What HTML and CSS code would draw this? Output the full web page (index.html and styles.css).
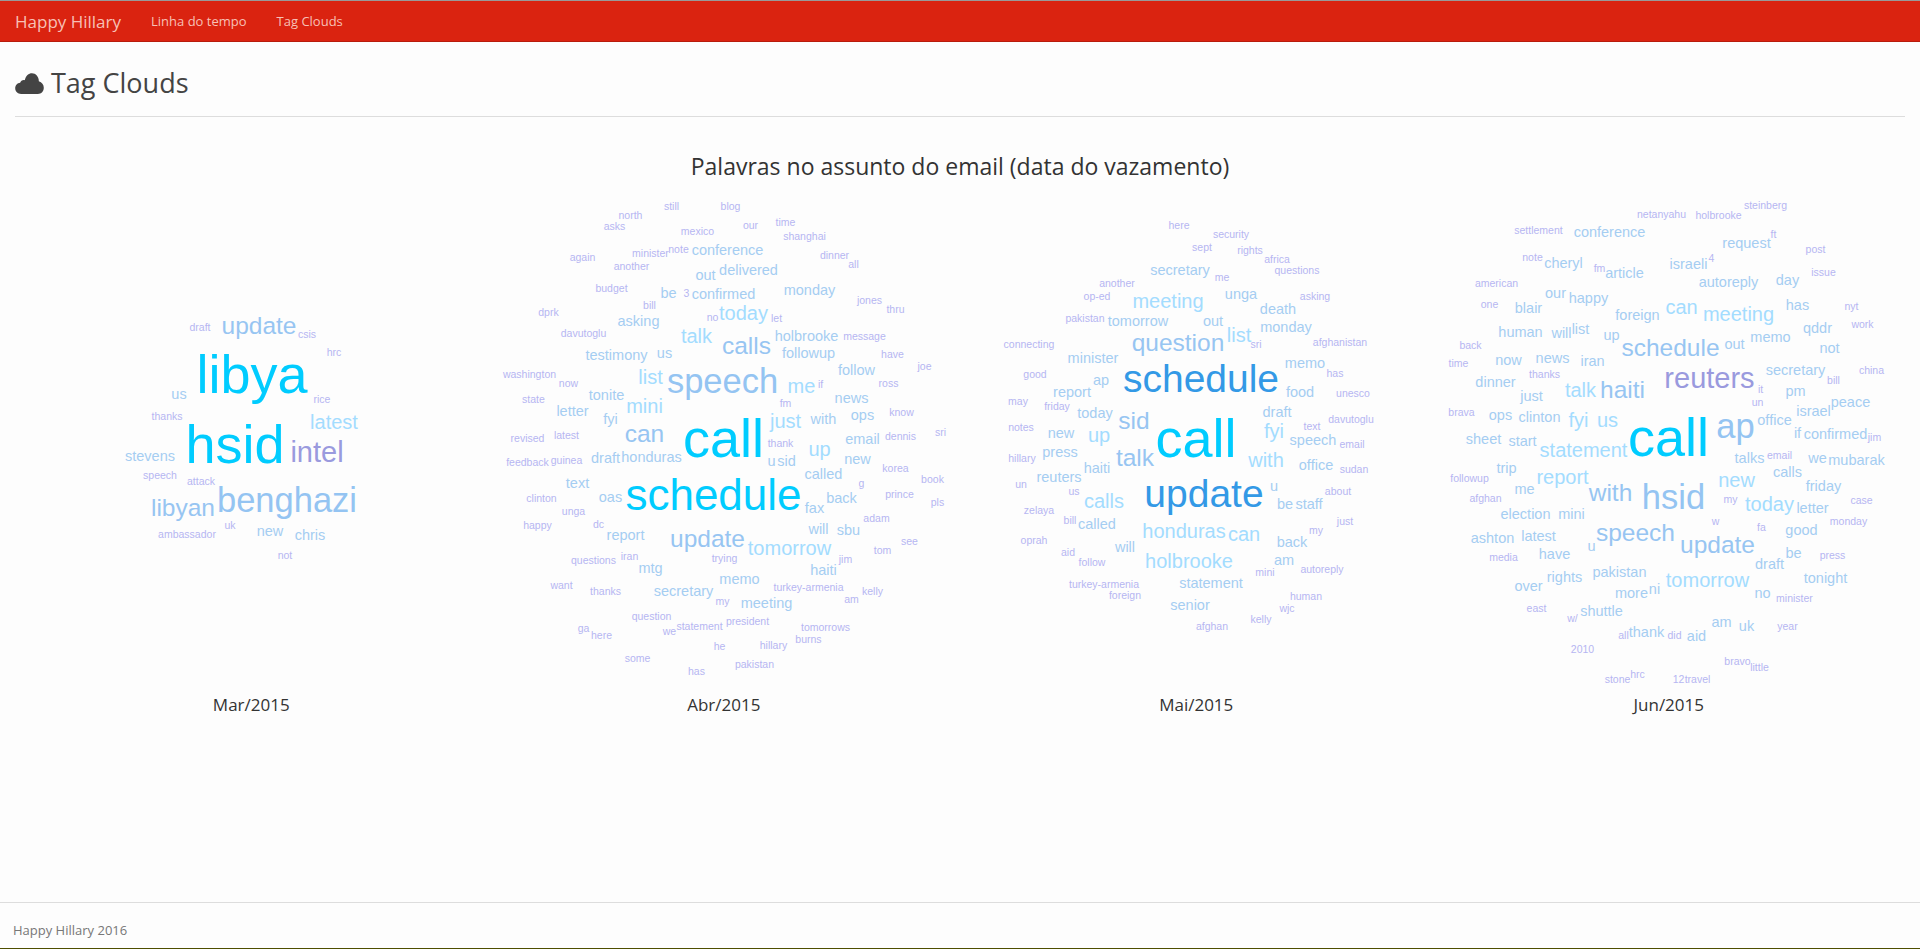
FILE: index.html
```html
<!DOCTYPE html>
<html>
<head>
    <meta charset="utf-8">
    <title>Happy Hillary</title>
    <link rel="stylesheet" href="styles.css">
</head>
<body>
    <nav class="navbar">
        <a class="brand" href="#">Happy Hillary</a>
        <a class="nav-link" href="#">Linha do tempo</a>
        <a class="nav-link" href="#">Tag Clouds</a>
    </nav>

    <main class="content">
        <h1 class="page-title">
            <svg class="title-icon" viewBox="0 0 29 21.3"><path d="M6 21.3C2.6 21.3 0 18.7 0 15.5 0 12.6 2.2 10.3 5 10 5.5 8 7.6 6.8 9.7 7.3 10.7 3 13.6 .3 17 .3c3.8 0 7 3.3 7 8.1 3 .8 5 3.6 5 6.6 0 3.5-2.5 6.3-6 6.3z"/></svg>
            Tag Clouds
        </h1>
        <h2 class="chart-title">Palavras no assunto do email (data do vazamento)</h2>
        <div id="clouds" class="cloud-grid"></div>
    </main>

    <footer class="footer">Happy Hillary 2016</footer>

    <script src="clouds.js"></script>
</body>
</html>
```

FILE: styles.css
```css
html, body {
    margin: 0;
    padding: 0;
}

body {
    font-family: "Open Sans", sans-serif;
    background-color: #fdfdfd;
    color: #333;
    min-height: 949px;
    box-sizing: border-box;
    display: flex;
    flex-direction: column;
    border-bottom: 1px solid #4d4d00;
}

.navbar {
    display: flex;
    align-items: center;
    height: 40px;
    padding-left: 15px;
    background-color: #da2310;
    border-top: 1px solid #999;
    border-bottom: 1px solid #b81c0c;
}

.brand {
    color: #f7c0b6;
    font-size: 17px;
    text-decoration: none;
    margin-right: 30px;
}

.nav-link {
    color: #f7c0b6;
    font-size: 13px;
    text-decoration: none;
    margin-right: 30px;
}

.content {
    padding: 0 15px;
    flex: 1;
}

.page-title {
    display: flex;
    align-items: center;
    gap: 7px;
    margin: 0;
    padding: 24px 0 16px;
    font-size: 27px;
    font-weight: 400;
    line-height: 34px;
    color: #444;
    border-bottom: 1px solid #ddd;
}

.title-icon {
    width: 29px;
    height: 21px;
    fill: #444;
}

.chart-title {
    margin: 35px 0 10px;
    font-size: 23px;
    font-weight: 400;
    line-height: 28px;
    text-align: center;
}

.cloud-grid {
    display: grid;
    grid-template-columns: repeat(4, 1fr);
}

.cloud {
    margin: 0;
    text-align: center;
    font-size: 17px;
}

.cloud svg {
    display: block;
    width: 100%;
    height: 500px;
}

.cloud text {
    font-family: "Liberation Sans", Arial, sans-serif;
    text-anchor: middle;
}

.cloud figcaption {
    margin-top: 5px;
    line-height: 20px;
}

/* tamanho e cor por peso da palavra */
.w1 { font-size: 10.5px; fill: #b6b6f2; }
.w2 { font-size: 14.5px; fill: #a5cdf2; }
.w3 { font-size: 20px; fill: #a3dcff; }
.w4 { font-size: 24.5px; fill: #97c5f2; }
.w5 { font-size: 29px; fill: #9a9ade; }
.w6 { font-size: 34.5px; fill: #94c4f2; }
.w7 { font-size: 39px; fill: #3399e6; }
.w8 { font-size: 54px; fill: #00ccff; }
.w9 { font-size: 44px; fill: #00ccff; }

.footer {
    padding: 18px 13px 9px;
    border-top: 1px solid #ddd;
    font-size: 13px;
    line-height: 18px;
    color: #777;
}
```

FILE: clouds.js
```js
// word, center x, baseline y (page coordinates), weight
const clouds = [
    {
        label: 'Mar/2015',
        words: [
            ['libya',252,393,8],['hsid',235,463,8],['update',259,334,4],['draft',200,331,1],['csis',307,338,1],
            ['hrc',334,356,1],['us',179,399,2],['rice',322,403,1],['thanks',167,420,1],['latest',334,429,3],
            ['intel',317,462,5],['stevens',150,461,2],['speech',160,479,1],['attack',201,485,1],['benghazi',287,512,6],
            ['libyan',183,516,4],['uk',230,529,1],['ambassador',187,538,1],['new',270,536,2],['chris',310,540,2],
            ['not',285,559,1]
        ]
    },
    {
        label: 'Abr/2015',
        words: [
            ['still',671,210,1],['blog',730,210,1],['north',630,219,1],['asks',614,230,1],['mexico',697,235,1],
            ['our',750,229,1],['time',785,226,1],['shanghai',804,240,1],['minister',650,257,1],['note',678,253,1],
            ['conference',727,255,2],['again',582,261,1],['another',631,270,1],['dinner',834,259,1],['all',853,268,1],
            ['out',705,280,2],['delivered',748,275,2],['budget',611,292,1],['be',668,298,2],['3',686,297,1],
            ['confirmed',723,299,2],['monday',809,295,2],['jones',869,304,1],['bill',649,309,1],['dprk',548,316,1],
            ['no',712,321,1],['today',743,320,3],['let',776,322,1],['thru',895,313,1],['asking',638,326,2],
            ['davutoglu',583,337,1],['talk',696,343,3],['holbrooke',806,341,2],['message',864,340,1],['calls',746,354,4],
            ['testimony',616,360,2],['us',664,358,2],['followup',808,358,2],['have',892,358,1],['washington',529,378,1],
            ['now',568,387,1],['follow',856,375,2],['joe',924,370,1],['list',650,384,3],['speech',722,393,6],
            ['me',801,393,3],['if',820,388,1],['ross',888,387,1],['state',533,403,1],['tonite',606,400,2],
            ['mini',644,413,3],['news',851,403,2],['fm',785,407,1],['letter',572,416,2],['fyi',610,424,2],
            ['ops',862,420,2],['know',901,416,1],['with',823,424,2],['just',785,428,3],['can',644,442,4],
            ['call',723,457,8],['email',862,444,2],['dennis',900,440,1],['sri',940,436,1],['thank',780,447,1],
            ['revised',527,442,1],['latest',566,439,1],['up',819,456,3],['u',771,466,2],['sid',786,466,2],
            ['new',857,464,2],['feedback',527,466,1],['guinea',566,464,1],['draft',605,463,2],['honduras',651,462,2],
            ['korea',895,472,1],['called',823,479,2],['book',932,483,1],['g',861,487,1],['text',577,488,2],
            ['schedule',713,510,9],['oas',610,502,2],['back',841,503,2],['prince',899,498,1],['pls',937,506,1],
            ['fax',814,513,2],['clinton',541,502,1],['unga',573,515,1],['adam',876,522,1],['will',818,534,2],
            ['sbu',848,535,2],['happy',537,529,1],['dc',598,528,1],['report',625,540,2],['update',707,547,4],
            ['tomorrow',789,555,3],['see',909,545,1],['tom',882,554,1],['jim',845,563,1],['questions',593,564,1],
            ['iran',629,560,1],['mtg',650,573,2],['trying',724,562,1],['haiti',823,575,2],['memo',739,584,2],
            ['turkey-armenia',808,591,1],['want',561,589,1],['thanks',605,595,1],['secretary',683,596,2],['kelly',872,595,1],
            ['am',851,603,1],['my',722,605,1],['meeting',766,608,2],['question',651,620,1],['statement',699,630,1],
            ['president',747,625,1],['ga',583,632,1],['here',601,639,1],['we',669,635,1],['tomorrows',825,631,1],
            ['burns',808,643,1],['hillary',773,649,1],['he',719,650,1],['some',637,662,1],['pakistan',754,668,1],
            ['has',696,675,1]
        ]
    },
    {
        label: 'Mai/2015',
        words: [
            ['here',1179,229,1],['security',1231,238,1],['sept',1202,251,1],['rights',1250,254,1],['africa',1277,263,1],
            ['secretary',1180,275,2],['me',1222,281,1],['questions',1297,274,1],['another',1117,287,1],['meeting',1168,308,3],
            ['unga',1241,299,2],['op-ed',1097,300,1],['asking',1315,300,1],['death',1278,314,2],['pakistan',1085,322,1],
            ['tomorrow',1138,326,2],['out',1213,326,2],['monday',1286,332,2],['list',1239,342,3],['question',1178,351,4],
            ['sri',1256,348,1],['connecting',1029,348,1],['afghanistan',1340,346,1],['minister',1093,363,2],['memo',1305,368,2],
            ['good',1035,378,1],['has',1335,377,1],['schedule',1201,392,7],['ap',1101,385,2],['food',1300,397,2],
            ['report',1072,397,2],['unesco',1353,397,1],['may',1018,405,1],['friday',1057,410,1],['today',1095,418,2],
            ['draft',1277,417,2],['sid',1134,429,4],['davutoglu',1351,423,1],['notes',1021,431,1],['text',1312,430,1],
            ['fyi',1274,438,3],['call',1196,457,8],['up',1099,442,3],['new',1061,438,2],['speech',1313,445,2],
            ['email',1352,448,1],['hillary',1022,462,1],['press',1060,457,2],['talk',1135,466,4],['with',1266,467,3],
            ['haiti',1097,473,2],['office',1316,470,2],['sudan',1354,473,1],['reuters',1059,482,2],['un',1021,488,1],
            ['us',1074,495,1],['update',1204,507,7],['u',1274,491,2],['about',1338,495,1],['calls',1104,508,3],
            ['be',1285,509,2],['staff',1309,509,2],['zelaya',1039,514,1],['bill',1070,524,1],['called',1097,529,2],
            ['just',1345,525,1],['my',1316,534,1],['honduras',1184,538,3],['can',1244,541,3],['back',1292,547,2],
            ['oprah',1034,544,1],['will',1125,552,2],['aid',1068,556,1],['holbrooke',1189,568,3],['am',1284,565,2],
            ['follow',1092,566,1],['mini',1265,576,1],['autoreply',1322,573,1],['statement',1211,588,2],['turkey-armenia',1104,588,1],
            ['foreign',1125,599,1],['human',1306,600,1],['senior',1190,610,2],['wjc',1287,612,1],['kelly',1261,623,1],
            ['afghan',1212,630,1]
        ]
    },
    {
        label: 'Jun/2015',
        words: [
            ['netanyahu',1661,218,1],['steinberg',1765,209,1],['holbrooke',1718,219,1],['ft',1773,238,1],['settlement',1538,234,1],
            ['conference',1609,237,2],['post',1815,253,1],['request',1746,248,2],['note',1532,261,1],['cheryl',1563,268,2],
            ['fm',1599,272,1],['article',1624,278,2],['israeli',1688,269,2],['4',1711,262,1],['issue',1823,276,1],
            ['day',1787,285,2],['autoreply',1728,287,2],['american',1496,287,1],['our',1555,298,2],['happy',1588,303,2],
            ['one',1489,308,1],['blair',1528,313,2],['foreign',1637,320,2],['has',1797,310,2],['can',1681,314,3],
            ['meeting',1738,321,3],['nyt',1851,310,1],['work',1862,328,1],['human',1520,337,2],['will',1561,338,2],
            ['list',1580,334,2],['up',1611,340,2],['qddr',1817,333,2],['memo',1770,342,2],['schedule',1670,356,4],
            ['out',1734,349,2],['back',1470,349,1],['not',1829,353,2],['time',1458,367,1],['now',1508,365,2],
            ['news',1552,363,2],['iran',1592,366,2],['thanks',1544,378,1],['dinner',1495,387,2],['secretary',1795,375,2],
            ['reuters',1709,388,5],['bill',1833,384,1],['china',1871,374,1],['talk',1580,397,3],['haiti',1622,398,4],
            ['just',1531,401,2],['pm',1795,396,2],['it',1760,393,1],['un',1757,406,1],['peace',1850,407,2],
            ['israel',1813,416,2],['brava',1461,416,1],['ops',1500,420,2],['clinton',1539,422,2],['fyi',1578,427,3],
            ['us',1607,427,3],['office',1774,425,2],['ap',1735,438,6],['if',1797,438,2],['sheet',1483,444,2],
            ['start',1522,446,2],['statement',1583,457,3],['call',1668,456,8],['confirmed',1835,439,2],['jim',1874,441,1],
            ['talks',1749,463,2],['email',1779,459,1],['we',1817,463,2],['mubarak',1856,465,2],['trip',1506,473,2],
            ['followup',1469,482,1],['report',1562,484,3],['calls',1787,477,2],['new',1736,487,3],['me',1524,494,2],
            ['friday',1823,491,2],['with',1610,501,4],['hsid',1673,509,6],['my',1730,503,1],['today',1769,511,3],
            ['afghan',1485,502,1],['case',1861,504,1],['letter',1812,513,2],['election',1525,519,2],['mini',1571,519,2],
            ['w',1715,525,1],['monday',1848,525,1],['fa',1761,531,1],['speech',1635,541,4],['good',1801,535,2],
            ['update',1717,553,4],['ashton',1492,543,2],['latest',1538,541,2],['u',1591,551,2],['have',1554,559,2],
            ['be',1793,558,2],['press',1832,559,1],['media',1503,561,1],['draft',1769,569,2],['pakistan',1619,577,2],
            ['rights',1564,582,2],['tomorrow',1707,587,3],['tonight',1825,583,2],['over',1528,591,2],['ni',1654,594,2],
            ['more',1631,598,2],['no',1762,598,2],['minister',1794,602,1],['east',1536,612,1],['shuttle',1601,616,2],
            ['w/',1572,622,1],['am',1721,627,2],['uk',1746,631,2],['year',1787,630,1],['thank',1646,637,2],
            ['aid',1696,641,2],['all',1623,639,1],['did',1674,639,1],['2010',1582,653,1],['bravo',1737,665,1],
            ['little',1759,671,1],['hrc',1637,678,1],['stone',1617,683,1],['12',1678,683,1],['travel',1697,683,1]
        ]
    }
];

const SVG_NS = 'http://www.w3.org/2000/svg';
const COL_WIDTH = 472.5;
const CLOUD_TOP = 190;
const CLOUD_HEIGHT = 500;

const grid = document.getElementById('clouds');

clouds.forEach((cloud, i) => {
    const figure = document.createElement('figure');
    figure.className = 'cloud';

    const svg = document.createElementNS(SVG_NS, 'svg');
    svg.setAttribute('viewBox', `${15 + i * COL_WIDTH} ${CLOUD_TOP} ${COL_WIDTH} ${CLOUD_HEIGHT}`);

    cloud.words.forEach(([word, x, y, weight]) => {
        const text = document.createElementNS(SVG_NS, 'text');
        text.setAttribute('x', x);
        text.setAttribute('y', y);
        text.setAttribute('class', 'w' + weight);
        text.textContent = word;
        svg.appendChild(text);
    });

    const caption = document.createElement('figcaption');
    caption.textContent = cloud.label;

    figure.appendChild(svg);
    figure.appendChild(caption);
    grid.appendChild(figure);
});
```
